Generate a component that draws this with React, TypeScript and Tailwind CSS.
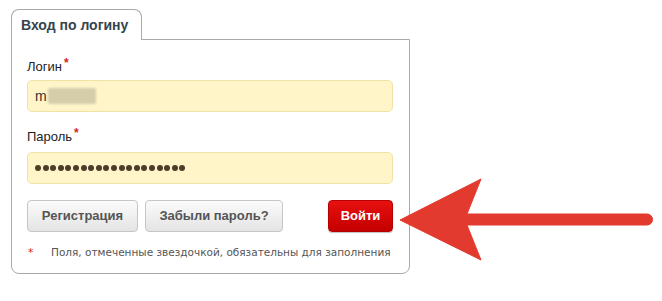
import React from 'react';

function Dots({ count }: { count: number }) {
    return (
        <div className="flex items-center gap-[1.6px]">
            {Array.from({ length: count }).map((_, i) => (
                <div key={i} className="h-[6px] w-[6px] rounded-full bg-[#4b3e2a]" />
            ))}
        </div>
    );
}

export default function App() {
    return (
        <div className="relative h-[301px] w-[662px] overflow-hidden bg-white pl-[11px] pt-[9px] font-['Liberation_Sans',Arial,sans-serif]">
            <div className="w-[399px]">
                {/* Tab */}
                <div className="relative z-10 mb-[-1px] flex h-[31px] w-[131px] items-center rounded-t-[8px] border border-b-0 border-[#a9a9a9] bg-white pl-[9px] pt-[1px]">
                    <span className="text-[14px] font-bold text-[#35444e]">Вход по логину</span>
                </div>

                {/* Panel */}
                <div className="rounded-b-[8px] border border-[#a9a9a9] bg-white pb-[13px] pl-[15px] pr-[16px] pt-[19px]">
                    <label className="block h-[16px] text-[13px] leading-[16px] text-[#222]">
                        Логин<span className="relative -top-[4px] ml-[2px] text-[12px] font-bold text-[#d3271c]">*</span>
                    </label>
                    <div className="mt-[5px] flex h-[32px] items-center rounded-[5px] border border-[#f0e2a6] bg-[#fff5c8] pl-[7px]">
                        <span className="text-[14px] text-[#333]">m</span>
                        <div className="ml-[1px] h-[16px] w-[48px] rounded-[2px] bg-[#d6cdab] blur-[1px]" />
                    </div>

                    <label className="mt-[17px] block h-[16px] text-[13px] leading-[16px] text-[#222]">
                        Пароль<span className="relative -top-[4px] ml-[2px] text-[12px] font-bold text-[#d3271c]">*</span>
                    </label>
                    <div className="mt-[7px] flex h-[32px] items-center rounded-[5px] border border-[#f0e2a6] bg-[#fff5c8] pl-[7px]">
                        <Dots count={20} />
                    </div>

                    <div className="mt-[16px] flex items-center">
                        <button className="h-[32px] w-[111px] rounded-[4px] border border-[#c6c6c6] bg-gradient-to-b from-[#fbfbfb] to-[#e4e4e4] text-[13px] font-bold text-[#555]">
                            Регистрация
                        </button>
                        <button className="ml-[7px] h-[32px] w-[138px] rounded-[4px] border border-[#c6c6c6] bg-gradient-to-b from-[#fbfbfb] to-[#e4e4e4] text-[13px] font-bold text-[#555]">
                            Забыли пароль?
                        </button>
                        <button className="ml-auto h-[32px] w-[65px] rounded-[4px] border border-[#b40000] bg-gradient-to-b from-[#e81010] to-[#c40000] text-[13px] font-bold text-white shadow-[0_1px_1px_rgba(0,0,0,0.25)]">
                            Войти
                        </button>
                    </div>

                    <div className="mt-[14px] flex h-[14px] items-center font-['DejaVu_Sans',Verdana,sans-serif] text-[10.5px] text-[#555]">
                        <span className="ml-[1px] w-[23px] text-[#d3271c]">*</span>
                        <span>Поля, отмеченные звездочкой, обязательны для заполнения</span>
                    </div>
                </div>
            </div>

            {/* Arrow */}
            <svg className="absolute left-0 top-0" width="662" height="301" viewBox="0 0 662 301">
                <path
                    d="M400 220 L481 179 L467 214 L647 214 A5.5 5.5 0 0 1 647 225 L467 225 L481 260 Z"
                    fill="#e23a2e"
                    stroke="#e23a2e"
                    strokeLinejoin="round"
                    strokeWidth="1"
                />
            </svg>
        </div>
    );
}
